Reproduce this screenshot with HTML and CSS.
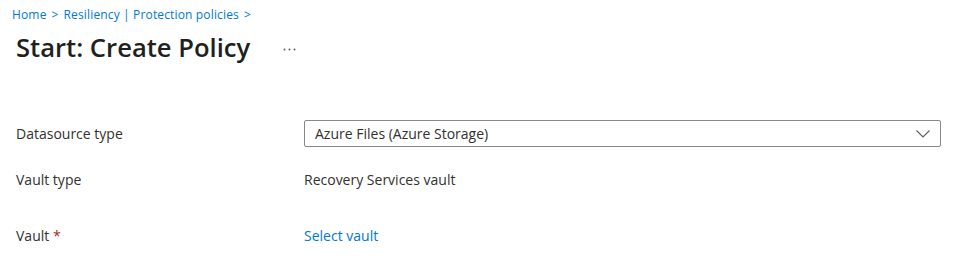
FILE: index.html
```html
<!DOCTYPE html>
<html>
<head>
<meta charset="utf-8">
<link rel="stylesheet" href="styles.css">
</head>
<body>
<div class="page">
  <nav class="crumbs"><a>Home</a><span class="sep">&gt;</span><a>Resiliency | Protection policies</a><span class="sep">&gt;</span></nav>
  <header class="head">
    <h1>Start: Create Policy</h1>
    <svg class="more" width="13" height="3" viewBox="0 0 13 3" aria-label="More"><circle cx="1.5" cy="1.5" r="1" fill="#605e5c"/><circle cx="6.5" cy="1.5" r="1" fill="#605e5c"/><circle cx="11.5" cy="1.5" r="1" fill="#605e5c"/></svg>
  </header>
  <div class="form">
    <div class="row r1">
      <div class="label">Datasource type</div>
      <div class="select"><span>Azure Files (Azure Storage)</span>
        <svg width="14" height="8" viewBox="0 0 14 8"><path d="M0.5 0.5 L7 7 L13.5 0.5" fill="none" stroke="#605e5c" stroke-width="1.1"/></svg>
      </div>
    </div>
    <div class="row r2">
      <div class="label">Vault type</div>
      <div class="value">Recovery Services vault</div>
    </div>
    <div class="row r3">
      <div class="label">Vault <span class="req">*</span></div>
      <div class="value"><a class="link">Select vault</a></div>
    </div>
  </div>
</div>
</body>
</html>
```

FILE: styles.css
```css
html, body { margin: 0; padding: 0; background: #fff; }
body { font-family: "Open Sans", "Noto Sans", sans-serif; color: #323130; width: 955px; height: 272px; overflow: hidden; }
.page { padding: 7px 0 0 12px; }
.crumbs { font-size: 12px; line-height: 16px; color: #0078d4; display: flex; gap: 5px; letter-spacing: 0.15px; }
.crumbs a { color: #0078d4; }
.head { display: flex; align-items: center; padding-left: 4px; margin-top: 8px; height: 34px; }
h1 { margin: 0; font-size: 25.6px; font-weight: 600; line-height: 34px; color: #201f1e; }
.more { margin-left: 33px; margin-top: 3px; }
.form { margin-top: 55px; padding-left: 4px; }
.row { display: flex; align-items: center; font-size: 14px; }
.label { width: 288px; flex: none; color: #323130; }
.req { color: #a4262c; }
.select { width: 615px; height: 25px; border: 1px solid #8a8886; border-radius: 2px; display: flex; align-items: center; justify-content: space-between; padding: 0 10px 0 10px; box-sizing: content-box; }
.select span { color: #323130; }
.r1 { height: 27px; }
.r2 { margin-top: 22px; height: 20px; }
.r3 { margin-top: 36px; height: 20px; }
.link { color: #0078d4; }
```
